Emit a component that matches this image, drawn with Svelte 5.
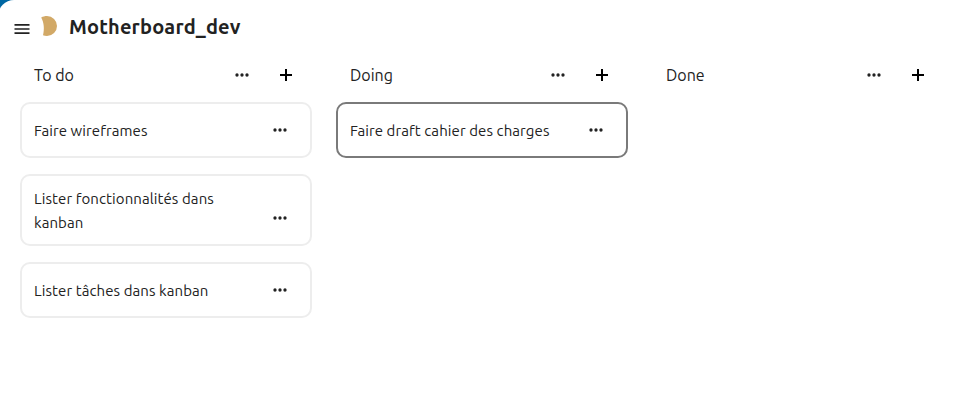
<script>
  const columns = [
    {
      title: 'To do',
      cards: [
        { text: 'Faire wireframes' },
        { text: 'Lister fonctionnalités dans kanban' },
        { text: 'Lister tâches dans kanban' }
      ]
    },
    { title: 'Doing', cards: [{ text: 'Faire draft cahier des charges', active: true }] },
    { title: 'Done', cards: [] }
  ];
</script>

{#snippet dots()}
  <button class="icon-btn" aria-label="Actions">
    <svg viewBox="0 0 24 24" fill="#222"><path d="M16 12a2 2 0 1 1 4 0a2 2 0 1 1-4 0M10 12a2 2 0 1 1 4 0a2 2 0 1 1-4 0M4 12a2 2 0 1 1 4 0a2 2 0 1 1-4 0" /></svg>
  </button>
{/snippet}

<div class="frame">
  <main>
    <header>
      <button class="menu" aria-label="Menu">
        <svg viewBox="0 0 24 24" fill="#222"><path d="M3 6H21V8H3V6M3 11H21V13H3V11M3 16H21V18H3V16Z" /></svg>
      </button>
      <svg class="moon" viewBox="0 0 18 20"><path d="M1.2 1.5C3 .5 4.8 0 7 0A10 10 0 0 1 7 20C5.5 20 4.2 19.8 3 19.3C4.6 13 4 6.5 1.2 1.5Z" fill="#d2a967" /></svg>
      <h1>Motherboard_dev</h1>
    </header>
    <div class="board">
      {#each columns as column}
        <section>
          <div class="head">
            <h2>{column.title}</h2>
            {@render dots()}
            <button class="icon-btn" aria-label="Add">
              <svg viewBox="0 0 20 20" fill="#000"><path d="M16 11H11V16H9V11H4V9H9V4H11V9H16Z" /></svg>
            </button>
          </div>
          <div class="cards">
            {#each column.cards as card}
              <article class:active={card.active}>
                <p>{card.text}</p>
                {@render dots()}
              </article>
            {/each}
          </div>
        </section>
      {/each}
    </div>
  </main>
</div>

<style>
  :global(body) { margin: 0; }
  .frame { height: 410px; background: #0067a3; overflow: hidden; }
  main {
    box-sizing: border-box;
    height: 410px;
    margin-left: -2px;
    padding-left: 2px;
    background: #fff;
    border-top-left-radius: 16px;
    color: #222;
    font-family: Ubuntu, "Noto Sans", sans-serif;
  }
  header { display: flex; height: 53px; padding-left: 12px; }
  button { border: 0; padding: 0; background: none; display: flex; align-items: center; justify-content: center; flex: none; }
  svg { display: block; width: 20px; height: 20px; }
  .menu { width: 20px; height: 20px; margin-top: 19px; }
  .moon { width: 18px; margin: 16px 0 0 8px; }
  h1 { margin: 12px 0 0 11px; font-size: 20px; line-height: 30px; font-weight: 700; letter-spacing: 0.18px; }
  .board { display: flex; gap: 24px; padding-left: 20px; }
  section { width: 292px; flex: none; }
  .head { display: flex; align-items: center; height: 44px; padding: 0 4px 0 14px; }
  h2 { flex: 1; margin: 0; font-size: 16px; font-weight: 400; line-height: 24px; }
  .icon-btn { width: 44px; height: 44px; }
  .cards { display: flex; flex-direction: column; gap: 16px; padding-top: 5px; }
  article {
    box-sizing: border-box;
    display: flex;
    align-items: flex-end;
    min-height: 56px;
    padding: 0 8px 4px 12px;
    border: 2px solid #ededed;
    border-radius: 10px;
  }
  article.active { border-color: #7a7a7a; }
  p { align-self: center; flex: 1; margin: 0; padding: 11px 20px 5px 0; font-size: 15px; line-height: 24px; letter-spacing: 0.09px; }
</style>
